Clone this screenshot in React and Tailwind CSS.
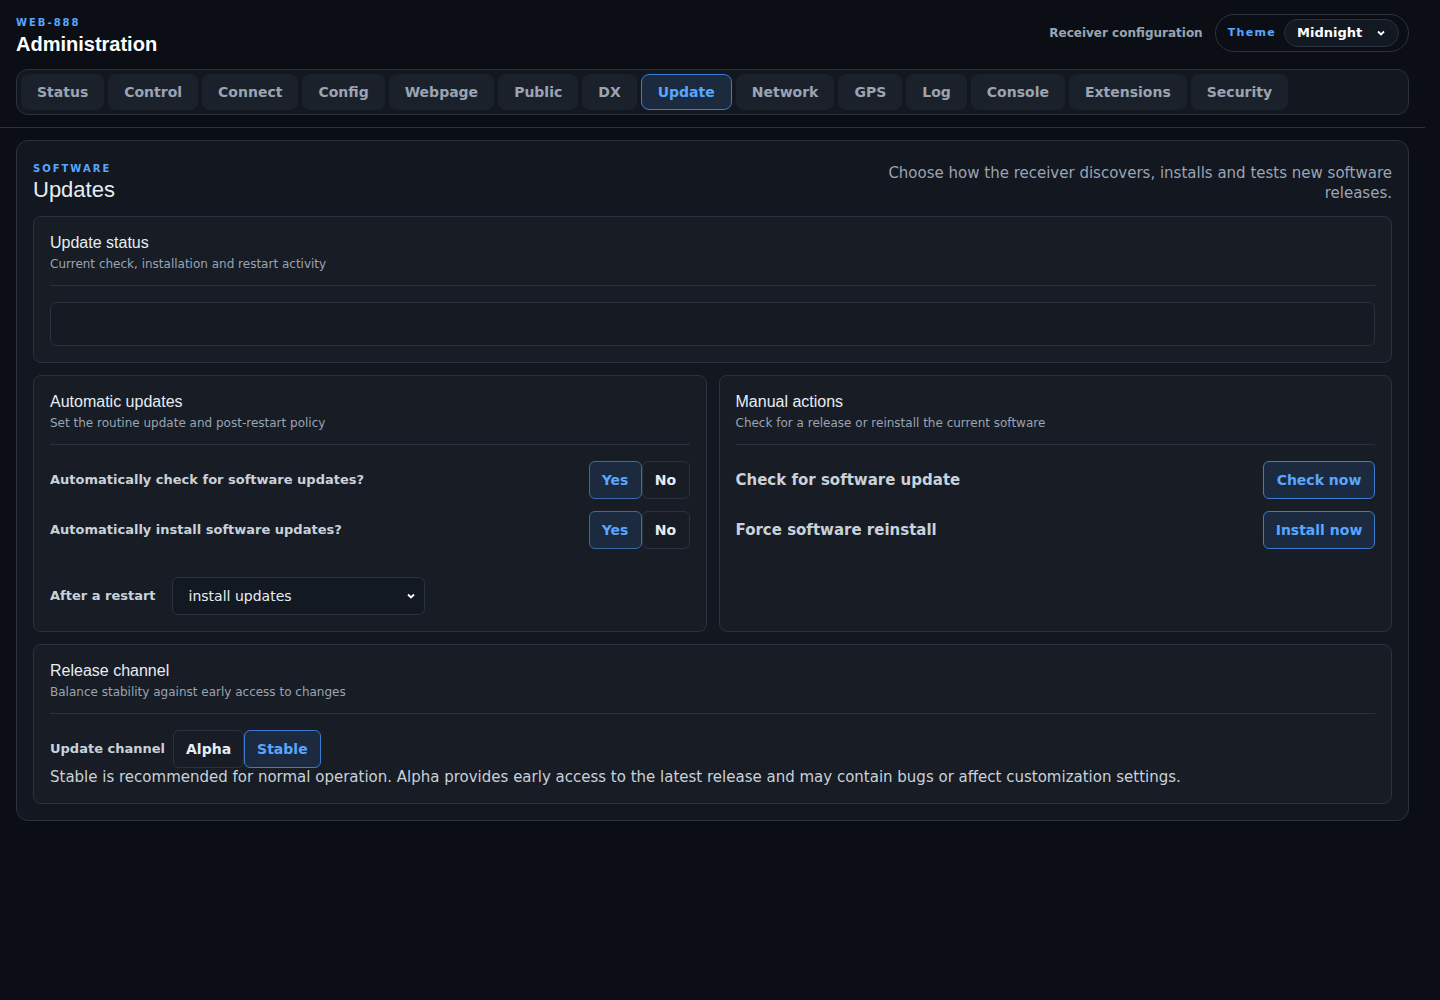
import React from 'react'

const tabs = ['Status', 'Control', 'Connect', 'Config', 'Webpage', 'Public', 'DX', 'Update', 'Network', 'GPS', 'Log', 'Console', 'Extensions', 'Security']
const dv = { fontFamily: '"DejaVu Sans", sans-serif' }
const ar = { fontFamily: '"Liberation Sans", Arial, sans-serif' }

function Card({ title, sub, children, className = '' }) {
    return (
        <div className={'rounded-lg border border-[#2a3240] bg-[#171c25] px-4 pt-4 pb-4 ' + className}>
            <div className="text-[16px] text-[#e6edf3] leading-5" style={ar}>{title}</div>
            <div className="text-[12px] text-[#9aa4b2] mt-[2px]" style={dv}>{sub}</div>
            <div className="border-t border-[#2a3240] mt-3"></div>
            {children}
        </div>
    )
}

function YesNo() {
    return (
        <div className="flex text-[14px] font-bold" style={dv}>
            <div className="w-[53px] h-[38px] flex items-center justify-center rounded-md border border-[#3b6aa8] bg-[#1c2a3f] text-[#58a6ff]">Yes</div>
            <div className="w-[48px] h-[38px] flex items-center justify-center rounded-md border border-[#2a3240] text-[#e6edf3]">No</div>
        </div>
    )
}

function Chevron() {
    return <svg width="10" height="10" viewBox="0 0 10 10"><path d="M2 3.5 5 6.5 8 3.5" stroke="white" strokeWidth="1.8" fill="none" /></svg>
}

export default function App() {
    return (
        <div className="min-h-[1000px] bg-[#0b0f15] w-full" style={dv}>
            <div className="w-[1425px]">
                <div className="px-4 pt-[15px]">
                    <div className="flex justify-between items-start">
                        <div>
                            <div className="text-[10px] font-bold tracking-[0.2em] text-[#58a6ff]">WEB-888</div>
                            <div className="text-[20px] font-bold text-white -mt-[1px]" style={ar}>Administration</div>
                        </div>
                        <div className="flex items-center gap-3 -mt-[1px]">
                            <span className="text-[12px] font-bold text-[#9aa4b2]">Receiver configuration</span>
                            <div className="flex items-center gap-2 rounded-full border border-[#2a3240] pl-3 pr-[9px] h-[38px]">
                                <span className="text-[11px] font-bold tracking-[0.12em] text-[#58a6ff]">Theme</span>
                                <div className="flex items-center justify-between w-[115px] h-[28px] rounded-full border border-[#2a3240] bg-[#131922] px-3 text-[13px] font-bold text-white">
                                    Midnight
                                    <Chevron />
                                </div>
                            </div>
                        </div>
                    </div>
                    <div className="mt-[10px] w-[1393px] flex gap-[4px] rounded-xl border border-[#2a3240] bg-[#131820] p-1">
                        {tabs.map(t => (
                            <div key={t} className={'h-[36px] px-[16px] flex items-center rounded-lg text-[14px] font-bold ' + (t === 'Update' ? 'border border-[#3b7bd0] bg-[#1c2a3f] text-[#58a6ff]' : 'bg-[#1b212b] text-[#9aa4b2]')}>{t}</div>
                        ))}
                    </div>
                </div>
                <div className="border-t border-[#2a3240] mt-3"></div>
                <div className="px-4 pt-3">
                    <div className="w-[1393px] rounded-xl border border-[#2a3240] bg-[#121720] p-4 flex flex-col gap-3">
                        <div className="flex justify-between items-start pt-1">
                            <div>
                                <div className="text-[10px] font-bold tracking-[0.2em] text-[#58a6ff]">SOFTWARE</div>
                                <div className="text-[22px] text-[#e6edf3] leading-7" style={ar}>Updates</div>
                            </div>
                            <div className="text-[15px] text-[#9aa4b2] text-right w-[560px] leading-5 mt-[2px]">Choose how the receiver discovers, installs and tests new software releases.</div>
                        </div>
                        <Card title="Update status" sub="Current check, installation and restart activity">
                            <div className="mt-4 h-[44px] rounded-md border border-[#2a3240] bg-[#151a23]"></div>
                        </Card>
                        <div className="grid grid-cols-2 gap-3">
                            <Card title="Automatic updates" sub="Set the routine update and post-restart policy">
                                <div className="mt-4 flex justify-between items-center">
                                    <span className="text-[13px] font-bold text-[#c9d1d9]">Automatically check for software updates?</span>
                                    <YesNo />
                                </div>
                                <div className="mt-3 flex justify-between items-center">
                                    <span className="text-[13px] font-bold text-[#c9d1d9]">Automatically install software updates?</span>
                                    <YesNo />
                                </div>
                                <div className="mt-7 flex items-center gap-4">
                                    <span className="text-[13px] font-bold text-[#c9d1d9]">After a restart</span>
                                    <div className="w-[253px] h-[38px] rounded-md border border-[#2a3240] bg-[#131922] flex items-center justify-between pl-4 pr-2 text-[14px] text-[#e6edf3]">
                                        install updates
                                        <Chevron />
                                    </div>
                                </div>
                            </Card>
                            <Card title="Manual actions" sub="Check for a release or reinstall the current software">
                                <div className="mt-4 flex justify-between items-center">
                                    <span className="text-[15px] font-bold text-[#c9d1d9]">Check for software update</span>
                                    <div className="w-[112px] h-[38px] rounded-md border border-[#3b7bd0] bg-[#1c2a3f] text-[#58a6ff] text-[14px] font-bold flex items-center justify-center">Check now</div>
                                </div>
                                <div className="mt-3 flex justify-between items-center">
                                    <span className="text-[15px] font-bold text-[#c9d1d9]">Force software reinstall</span>
                                    <div className="w-[112px] h-[38px] rounded-md border border-[#3b7bd0] bg-[#1c2a3f] text-[#58a6ff] text-[14px] font-bold flex items-center justify-center">Install now</div>
                                </div>
                            </Card>
                        </div>
                        <Card title="Release channel" sub="Balance stability against early access to changes">
                            <div className="mt-4 flex items-center gap-2">
                                <span className="text-[13px] font-bold text-[#c9d1d9]">Update channel</span>
                                <div className="flex text-[14px] font-bold">
                                    <div className="h-[38px] px-3 flex items-center rounded-md border border-[#2a3240] text-[#e6edf3]">Alpha</div>
                                    <div className="h-[38px] px-3 flex items-center rounded-md border border-[#3b7bd0] bg-[#1c2a3f] text-[#58a6ff]">Stable</div>
                                </div>
                            </div>
                            <div className="text-[15px] text-[#c9d1d9] leading-5 mt-[-1px]">Stable is recommended for normal operation. Alpha provides early access to the latest release and may contain bugs or affect customization settings.</div>
                        </Card>
                    </div>
                </div>
            </div>
        </div>
    )
}
